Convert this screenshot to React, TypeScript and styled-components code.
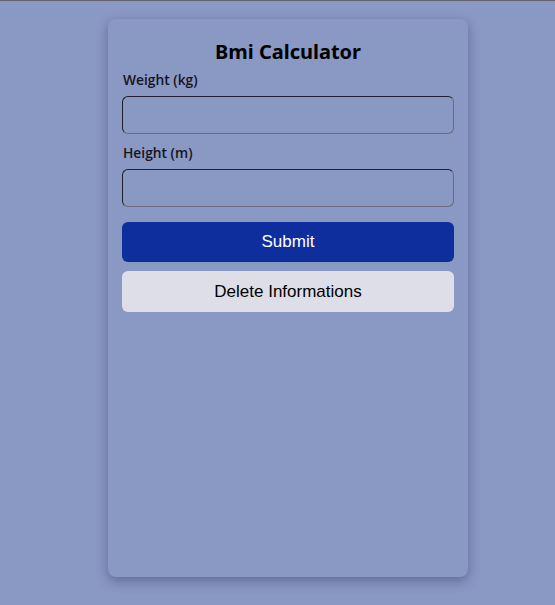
import React from 'react';
import styled, { createGlobalStyle } from 'styled-components';

const GlobalStyle = createGlobalStyle`
	html, body {
		margin: 0;
		padding: 0;
		height: 100%;
	}
	body {
		background: #8a98c4;
		font-family: 'Noto Sans', 'Open Sans', sans-serif;
		border-top: 1px solid #5f6169;
		box-sizing: border-box;
	}
`;

const Page = styled.div`
	display: flex;
	justify-content: center;
	padding-top: 18px;
	padding-left: 21px;
`;

const Card = styled.form`
	box-sizing: border-box;
	width: 360px;
	height: 558px;
	padding: 18px 14px;
	border-radius: 8px;
	background: #8a98c4;
	box-shadow: 0 4px 12px rgba(40, 50, 90, 0.45);
	display: flex;
	flex-direction: column;
`;

const Title = styled.h1`
	margin: 0 0 5px;
	text-align: center;
	font-size: 20px;
	line-height: 30px;
	font-weight: 700;
	color: #000;
`;

const Label = styled.label`
	font-family: 'Open Sans', 'Noto Sans', sans-serif;
	font-size: 13.8px;
	line-height: 16px;
	font-weight: 600;
	color: #15151c;
	margin: 0 1px 8px;
`;

const Input = styled.input`
	box-sizing: border-box;
	width: 100%;
	height: 38px;
	border: 1px solid;
	border-color: #1e1f28 #6b6d7a #6b6d7a #1e1f28;
	border-radius: 6px;
	background: transparent;
	margin-bottom: 11px;
	font-size: 15px;
	padding: 0 10px;
`;

const Button = styled.button<{ $primary?: boolean }>`
	box-sizing: border-box;
	width: 100%;
	height: ${(p) => (p.$primary ? '40px' : '41px')};
	border: none;
	border-radius: 6px;
	font-family: 'Liberation Sans', Arial, sans-serif;
	font-size: 17px;
	background: ${(p) => (p.$primary ? '#0d2e9c' : '#dddee8')};
	color: ${(p) => (p.$primary ? '#fff' : '#000')};
	margin-top: ${(p) => (p.$primary ? '4px' : '9px')};
	cursor: pointer;
`;

const App: React.FC = () => {
	return (
		<>
			<GlobalStyle />
			<Page>
				<Card onSubmit={(e) => e.preventDefault()}>
					<Title>Bmi Calculator</Title>
					<Label htmlFor="weight">Weight (kg)</Label>
					<Input id="weight" type="text" />
					<Label htmlFor="height">Height (m)</Label>
					<Input id="height" type="text" />
					<Button type="submit" $primary>
						Submit
					</Button>
					<Button type="button">Delete Informations</Button>
				</Card>
			</Page>
		</>
	);
};

export default App;
